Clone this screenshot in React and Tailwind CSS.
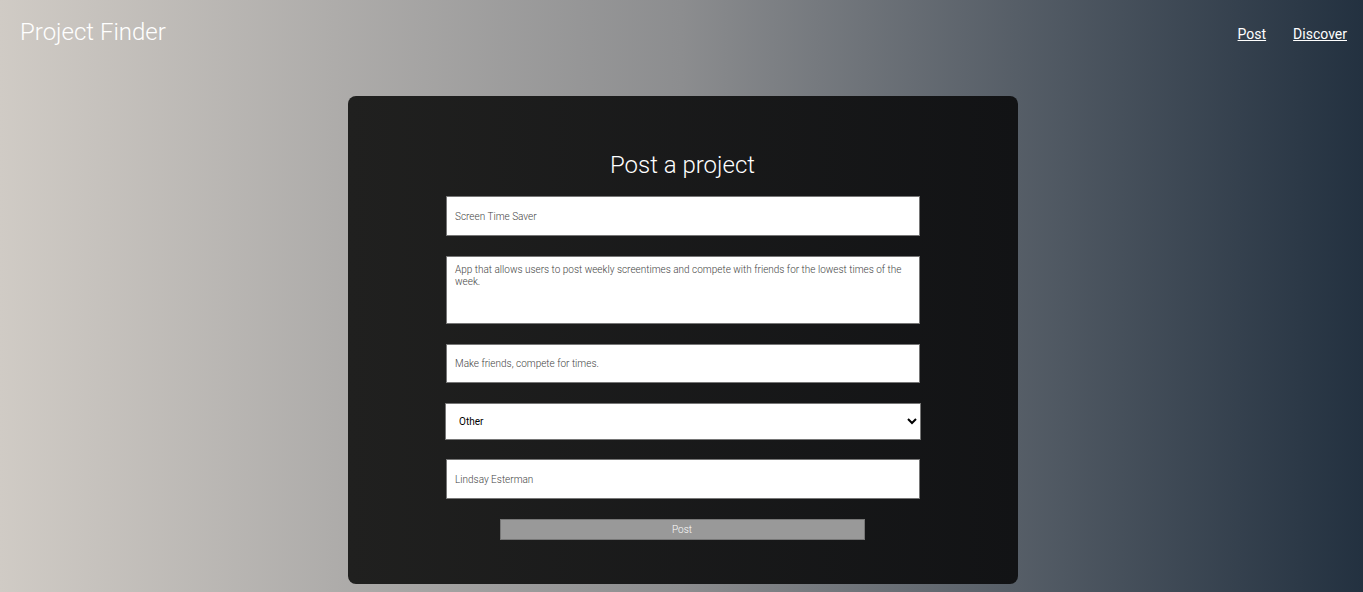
import React, { useState } from "react";

const fieldClass =
  "w-full bg-white border border-[#767676] text-[10px] font-light text-[#444] px-2 outline-none";

const App = () => {
  const [title, setTitle] = useState("Screen Time Saver");
  const [desc, setDesc] = useState(
    "App that allows users to post weekly screentimes and compete with friends for the lowest times of the week."
  );
  const [goals, setGoals] = useState("Make friends, compete for times.");
  const [category, setCategory] = useState("Other");
  const [owner, setOwner] = useState("Lindsay Esterman");

  return (
    <div
      className="h-[592px] w-full overflow-hidden bg-gradient-to-r from-[#d0cbc5] via-[#8c8d8f] to-[#233140] flex flex-col"
      style={{ fontFamily: "Roboto, 'Liberation Sans', sans-serif" }}
    >
      <header className="flex items-center justify-between pl-5 pr-4 h-[64px]">
        <h1 className="text-[24px] text-white font-light">Project Finder</h1>
        <nav className="flex gap-[27px] text-[14px] text-white pt-1">
          <a href="#" className="underline">Post</a>
          <a href="#" className="underline">Discover</a>
        </nav>
      </header>

      <div className="flex justify-center pt-8 pl-[2px]">
        <div className="w-[670px] h-[488px] rounded-lg bg-gradient-to-r from-[#20201f] to-[#121315] flex flex-col items-center">
          <h2 className="text-[24px] text-white font-light mt-[57px] leading-none">Post a project</h2>
          <form className="w-[474px] flex flex-col mt-[19px] ml-px" onSubmit={(e) => e.preventDefault()}>
            <input
              className={`${fieldClass} h-[40px]`}
              value={title}
              onChange={(e) => setTitle(e.target.value)}
            />
            <textarea
              className={`${fieldClass} h-[68px] mt-[20px] pt-[7px] resize-none leading-[12px]`}
              value={desc}
              onChange={(e) => setDesc(e.target.value)}
            />
            <input
              className={`${fieldClass} h-[39px] mt-[20px]`}
              value={goals}
              onChange={(e) => setGoals(e.target.value)}
            />
            <select
              className="w-[476px] -ml-px h-[37px] mt-[20px] bg-white border border-[#767676] text-[10px] text-black pl-[9px] pr-1 outline-none"
              value={category}
              onChange={(e) => setCategory(e.target.value)}
            >
              <option>Web App</option>
              <option>Mobile App</option>
              <option>Game</option>
              <option>Other</option>
            </select>
            <input
              className={`${fieldClass} h-[40px] mt-[19px]`}
              value={owner}
              onChange={(e) => setOwner(e.target.value)}
            />
            <button
              type="submit"
              className="self-center w-[365px] h-[21px] mt-[20px] mr-[2px] bg-[#999999] border border-[#777] text-[10px] font-light text-white"
            >
              Post
            </button>
          </form>
        </div>
      </div>
    </div>
  );
};

export default App;
